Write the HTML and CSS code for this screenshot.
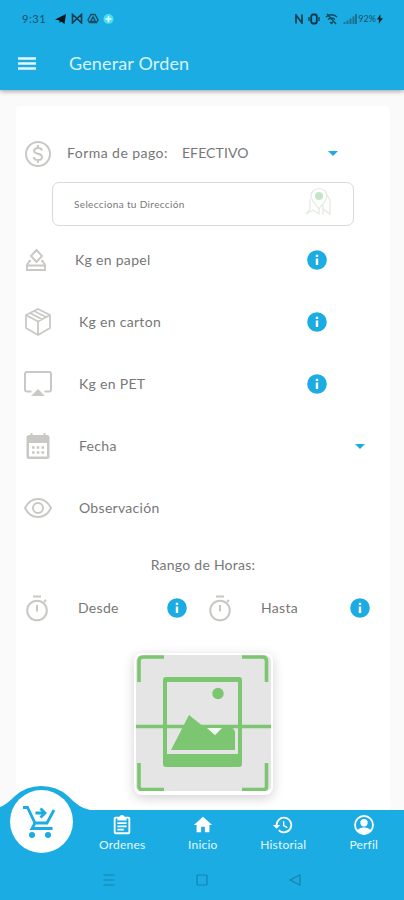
FILE: index.html
```html
<!DOCTYPE html>
<html lang="es">
<head>
    <meta charset="UTF-8">
    <meta name="viewport" content="width=device-width, initial-scale=1.0">
    <title>Generar Orden</title>
    <link rel="stylesheet" href="styles.css">
</head>
<body>

    <svg class="sprite" width="0" height="0">
        <symbol id="info" viewBox="0 0 20 20">
            <circle cx="10" cy="10" r="9.8" fill="#1bace3"/>
            <path d="M8.800 4.800h2.400v2.300H8.800zM8.800 8.500h2.400V15H8.800z" fill="#fff"/>
        </symbol>
        <symbol id="timer" viewBox="0 0 24 28">
            <g fill="none" stroke="#c9c8c4" stroke-width="2">
                <circle cx="12" cy="16.5" r="9.8"/>
                <path d="M8 2.5h8M12 11v6.500M19 8l2-2"/>
            </g>
        </symbol>
    </svg>

    <div class="app">
        <header class="header">
            <!-- Barra de estado -->
            <div class="status">
                <span class="status-time">9:31</span>
                <svg width="13" height="12" viewBox="0 0 13 12"><path d="M1 6.500L12 1l-1.500 10-3.500-2.500L5.500 10V7.500z" fill="#07151c"/></svg>
                <svg width="12" height="11" viewBox="0 0 12 11"><path d="M1.500 10V1.500L6 5.500l4.500-4V10L6 5.500z" fill="none" stroke="#183c4c" stroke-width="1.600"/></svg>
                <svg width="12" height="11" viewBox="0 0 12 11"><path d="M4 1.500h4L11 7 9.500 9.500h-7L1 7zM6 4L3.500 8.500h5z" fill="none" stroke="#1d4c60" stroke-width="1.400"/></svg>
                <svg width="11" height="12" viewBox="0 0 11 12"><circle cx="5.500" cy="6" r="5" fill="#4fdcea"/><path d="M5.500 3v6M2.500 6h6" stroke="#e2ffff" stroke-width="1.500"/></svg>
                <div class="status-right">
                    <svg width="8" height="10" viewBox="0 0 8 10"><path d="M1 9.500V1l6 8V.5" fill="none" stroke="#12404f" stroke-width="1.700"/></svg>
                    <svg width="12" height="12" viewBox="0 0 12 12"><rect x="3.200" y="1.500" width="5.600" height="9" rx="2" fill="none" stroke="#0e3343" stroke-width="1.800"/><path d="M1 4v4M11 4v4" stroke="#0e3343" stroke-width="1.200"/></svg>
                    <svg width="13" height="12" viewBox="0 0 13 12"><path d="M1 4q5.500-4.500 11 0M3 6.500q3.500-3 7 0M5 9l1.500 1.500L8 9M2 1l9 10" fill="none" stroke="#174a5d" stroke-width="1.500"/></svg>
                    <svg width="14" height="10" viewBox="0 0 14 10"><path d="M1.500 10V8M4.500 10V6.500M7.500 10V4.500M10.500 10V2.500M13 10V0" stroke="#1c7090" stroke-width="2"/></svg>
                    <span class="status-battery">92%</span>
                    <svg width="6" height="10" viewBox="0 0 7 11"><path d="M4 0L0 6.200h2.500L2 11l5-6.500H4z" fill="#06222e"/></svg>
                </div>
            </div>

            <!-- Título -->
            <div class="appbar">
                <svg width="18" height="13" viewBox="0 0 18 13"><path d="M0 1.500h18M0 6.500h18M0 11.500h18" stroke="#e3f7fe" stroke-width="2.300"/></svg>
                <h1>Generar Orden</h1>
            </div>
        </header>

        <main class="card">
            <div class="row row-pay">
                <div class="icon">
                    <svg width="28" height="28" viewBox="0 0 28 28" fill="none" stroke="#c9c8c4" stroke-width="2"><circle cx="14" cy="14" r="12"/><path d="M18 10.500Q17.500 8 14 8t-4 2.800q0 2.200 4 3t4 3.200q0 3-4 3t-4.300-3M14 5v3M14 20v3"/></svg>
                </div>
                <span class="label">Forma de pago:</span>
                <span class="value">EFECTIVO</span>
                <i class="caret"></i>
            </div>

            <div class="address">
                <span>Selecciona tu Dirección</span>
                <svg width="28" height="30" viewBox="0 0 28 30" fill="none" stroke="#e2eadf" stroke-width="1.200"><path d="M14 22L8 14q-4-6 0-10 6-5 12 0 4 4 0 10zM5 12v10L1 27l7-4 6 4 0-5M18 18v10M22 8l3 5v14l-7-5"/><circle cx="14" cy="9" r="4" fill="#c5e6c6" stroke="none"/></svg>
            </div>

            <div class="row row-paper">
                <div class="icon">
                    <svg width="20" height="24" viewBox="0 0 20 24" fill="none" stroke="#c9c8c4" stroke-width="1.900"><path d="M10.500 2l5.500 6-5.500 6L5 8zM5 13H3.500L1 17v5h18v-5l-2.500-4H15M1 17.500h18"/></svg>
                </div>
                <span class="label">Kg en papel</span>
                <svg class="info"><use href="#info"/></svg>
            </div>

            <div class="row">
                <div class="icon">
                    <svg width="28" height="30" viewBox="0 0 28 30" fill="none" stroke="#c9c8c4" stroke-width="1.800" stroke-linejoin="round"><path d="M14 2l12 6v13l-12 7-12-7V8zM2 8l12 6.500L26 8M14 14.500V28M6 6l12 6.300M10 4l12 6"/></svg>
                </div>
                <span class="label">Kg en carton</span>
                <svg class="info"><use href="#info"/></svg>
            </div>

            <div class="row">
                <div class="icon">
                    <svg width="28" height="26" viewBox="0 0 28 26"><path d="M7.500 20.500H3q-2 0-2-2V3q0-2 2-2h22q2 0 2 2v15.500q0 2-2 2h-4.500" fill="none" stroke="#c9c8c4" stroke-width="2"/><path d="M14 18l7 7H7z" fill="#c9c8c4"/></svg>
                </div>
                <span class="label">Kg en PET</span>
                <svg class="info"><use href="#info"/></svg>
            </div>

            <div class="row row-date">
                <div class="icon">
                    <svg width="24" height="28" viewBox="0 0 24 28"><path d="M3 3h18q2.500 0 2.500 2.500v19Q23.500 27 21 27H3Q.5 27 .5 24.500v-19Q.5 3 3 3zM3 11v13.500h18V11z" fill="#c9c8c4" fill-rule="evenodd"/><path d="M5.500 1v4M18.500 1v4" stroke="#c9c8c4" stroke-width="2"/><path d="M6 15.500h12M6 20.500h12" stroke="#c9c8c4" stroke-width="2.600" stroke-dasharray="2.600 2.100"/></svg>
                </div>
                <span class="label">Fecha</span>
                <i class="caret"></i>
            </div>

            <div class="row">
                <div class="icon">
                    <svg width="28" height="20" viewBox="0 0 28 20" fill="none" stroke="#c9c8c4" stroke-width="2"><path d="M1 10Q5.500 1 14 1t13 9q-4.500 9-13 9T1 10z"/><circle cx="14" cy="10" r="5"/></svg>
                </div>
                <span class="label">Observación</span>
            </div>

            <h2>Rango de Horas:</h2>

            <div class="hours">
                <div class="hour">
                    <svg class="timer"><use href="#timer"/></svg>
                    <span class="label">Desde</span>
                    <svg class="info"><use href="#info"/></svg>
                </div>
                <div class="hour">
                    <svg class="timer"><use href="#timer"/></svg>
                    <span class="label">Hasta</span>
                    <svg class="info"><use href="#info"/></svg>
                </div>
            </div>

            <!-- Foto -->
            <div class="photo">
                <svg width="135" height="136" viewBox="0 0 135 136">
                    <g fill="none" stroke="#7cc671">
                        <path d="M3 27V6q0-4 4-4H28M106 2h20.500q4 0 4 4v21M130.500 108v24q0 2.500-3 2.500H106M28 134.500H6q-3 0-3-2.500v-24" stroke-width="3.600"/>
                        <path d="M0 71.500h135" stroke-width="3.400"/>
                    </g>
                    <path d="M30 22h73q3 0 3 3v84q0 3-3 3H30q-3 0-3-3V25q0-3 3-3zM31 27v72h71V27z" fill="#7cc671" fill-rule="evenodd"/>
                    <circle cx="82" cy="38.500" r="5.700" fill="#7cc671"/>
                    <path d="M35 95l18-35 15 12h3l8 8 7-8h8q4 1 5 5v18z" fill="#7cc671"/>
                    <path d="M71 73h15l-7 7z" fill="#f3faf1"/>
                </svg>
            </div>
        </main>

        <footer class="footer">
            <svg class="hump" width="90" height="26" viewBox="0 0 90 26"><path d="M0 21Q6 19 15 10 26 0 41 0q16 0 27 10 11 12 22 14v2H0z" fill="#1bace3"/></svg>
            <div class="cart">
                <svg width="34" height="36" viewBox="0 0 34 36"><g fill="none" stroke="#1bace3" stroke-width="2.800"><path d="M1 3.500h4.500L13 19h12l7-13M13 19l-3 5.500h20.500M13.500 9H22M18.500 4.500L23 9l-4.500 4.500"/></g><circle cx="10" cy="31" r="3" fill="#1bace3"/><circle cx="26" cy="31" r="3" fill="#1bace3"/></svg>
            </div>
            <nav class="tabs">
                <a class="tab">
                    <svg width="22" height="22" viewBox="0 0 24 24" fill="#fff"><path d="M19 3h-4.200C14.400 1.800 13.300 1 12 1s-2.400.8-2.800 2H5c-1.100 0-2 .9-2 2v15c0 1.100.9 2 2 2h14c1.100 0 2-.9 2-2V5c0-1.100-.9-2-2-2zM5 5h2v2h10V5h2v15H5zM7 9h10v2H7zM7 12.500h10v2H7zM7 16h7v2H7z"/></svg>
                    <span>Ordenes</span>
                </a>
                <a class="tab">
                    <svg width="22" height="22" viewBox="0 0 24 24" fill="#fff"><path d="M10 20v-6h4v6h5v-8h3L12 3 2 12h3v8z"/></svg>
                    <span>Inicio</span>
                </a>
                <a class="tab">
                    <svg width="22" height="22" viewBox="0 0 24 24" fill="#fff"><path d="M13 3a9 9 0 0 0-9 9H1l4 4 4-4H6a7 7 0 1 1 2.060 4.940l-1.420 1.420A9 9 0 1 0 13 3zm-1 5v5l4.300 2.500.7-1.200-3.500-2.100V8z"/></svg>
                    <span>Historial</span>
                </a>
                <a class="tab">
                    <svg width="22" height="22" viewBox="0 0 24 24"><circle cx="12" cy="12" r="9.800" fill="none" stroke="#fff" stroke-width="2"/><circle cx="12" cy="9.500" r="4" fill="#fff"/><path d="M4.500 17.500Q8 14.500 12 14.500t7.500 3Q16.500 21 12 21t-7.500-3.500z" fill="#fff"/></svg>
                    <span>Perfil</span>
                </a>
            </nav>
            <!-- Botones del sistema -->
            <div class="system">
                <svg width="14" height="14" viewBox="0 0 14 14"><path d="M1.500 2h11M1.500 7h11M1.500 12h11"/></svg>
                <svg width="14" height="14" viewBox="0 0 14 14"><rect x="2" y="2" width="10" height="10" rx="1"/></svg>
                <svg width="14" height="14" viewBox="0 0 14 14"><path d="M12 2v10L2 7z"/></svg>
            </div>
        </footer>
    </div>

</body>
</html>
```
FILE: styles.css
```css
* {
    box-sizing: border-box;
}

body {
    margin: 0;
    font-family: Lato, "Noto Sans", sans-serif;
    background-color: #fafafa;
    color: #777;
}

svg {
    display: block;
    flex-shrink: 0;
}

.sprite {
    position: absolute;
}

.app {
    display: flex;
    flex-direction: column;
    height: 900px;
    overflow: hidden;
}

/* Cabecera */
.header {
    height: 90px;
    flex-shrink: 0;
    background-color: #1bace3;
    box-shadow: 0 1px 5px rgba(0, 0, 0, 0.4);
}

.status {
    display: flex;
    align-items: center;
    gap: 4px;
    height: 36px;
    padding: 1px 21px 0 22px;
    color: #164f65;
}

.status-time {
    width: 28px;
    font-size: 11px;
    letter-spacing: 0.6px;
}

.status-right {
    display: flex;
    align-items: center;
    gap: 5px;
    margin-left: auto;
}

.status-battery {
    margin: 0 -4px;
    font-size: 9px;
}

.appbar {
    display: flex;
    align-items: center;
    height: 54px;
    padding-left: 18px;
}

.appbar h1 {
    margin: -1px 0 0 33px;
    font-size: 18px;
    font-weight: 400;
    letter-spacing: 0.15px;
    color: #d9f3fd;
}

/* Formulario */
.card {
    flex: 1;
    min-height: 0;
    width: 374px;
    margin: 16px 0 0 16px;
    padding-top: 19px;
    background-color: #fff;
    border-radius: 4px 4px 0 0;
}

.row {
    display: flex;
    align-items: center;
    height: 62px;
    padding: 0 63px 0 7px;
}

.icon {
    display: flex;
    justify-content: center;
    width: 29px;
    margin-right: 27px;
}

.label,
.value {
    padding-bottom: 2px;
    font-size: 14px;
    letter-spacing: 0.3px;
}

.info {
    width: 20px;
    height: 20px;
    margin-left: auto;
}

.caret {
    margin-left: auto;
    border-top: 5px solid #1bace3;
    border-left: 5px solid transparent;
    border-right: 5px solid transparent;
}

.row-pay {
    height: 57px;
    padding-right: 52px;
}

.row-pay .icon {
    margin-right: 15px;
}

.row-pay .label {
    letter-spacing: 0.45px;
}

.row-pay .value {
    margin-left: 14px;
    letter-spacing: 0.1px;
}

.row-paper .icon {
    width: 25px;
}

.row-date {
    padding-right: 25px;
}

.address {
    display: flex;
    align-items: center;
    justify-content: space-between;
    width: 302px;
    height: 44px;
    margin: 0 0 3px 36px;
    padding: 0 20px 4px 21px;
    border: 1px solid #d8d8d4;
    border-radius: 7px;
    font-size: 10px;
    letter-spacing: 0.36px;
}

.address span {
    padding-top: 4px;
}

h2 {
    margin: 0;
    font-size: 14px;
    font-weight: 400;
    line-height: 51px;
    letter-spacing: 0.25px;
    text-align: center;
}

.hours {
    display: flex;
    height: 36px;
    padding-left: 9px;
}

.hour {
    display: flex;
    align-items: center;
    width: 162px;
    margin-right: 21px;
}

.hour + .hour {
    margin-right: 0;
}

.hour .label {
    margin-left: 29px;
}

.timer {
    width: 24px;
    height: 28px;
}

.photo {
    width: 139px;
    height: 142px;
    margin: 27px auto 0;
    background-color: #e5e5e5;
    border: 2px solid #fff;
    border-bottom-width: 4px;
    border-radius: 8px;
    box-shadow: 0 3px 12px rgba(0, 0, 0, 0.18);
}

/* Navegación inferior */
.footer {
    position: relative;
    height: 90px;
    flex-shrink: 0;
    background-color: #1bace3;
}

.hump {
    position: absolute;
    left: 0;
    top: -24px;
}

.cart {
    position: absolute;
    left: 10px;
    top: -20px;
    display: flex;
    align-items: center;
    justify-content: center;
    width: 63px;
    height: 63px;
    padding-right: 5px;
    background-color: #fff;
    border-radius: 50%;
}

.tabs {
    display: flex;
    padding-left: 82px;
}

.tab {
    display: flex;
    flex: 1 1 0;
    flex-direction: column;
    align-items: center;
    padding-top: 4px;
    font-size: 12px;
    line-height: 18px;
    letter-spacing: 0.2px;
    color: #e8f8fe;
}

.system {
    display: flex;
    justify-content: center;
    gap: 79px;
    padding-top: 19px;
}

.system svg {
    fill: none;
    stroke: #1783ad;
    stroke-width: 1.2;
}
```
